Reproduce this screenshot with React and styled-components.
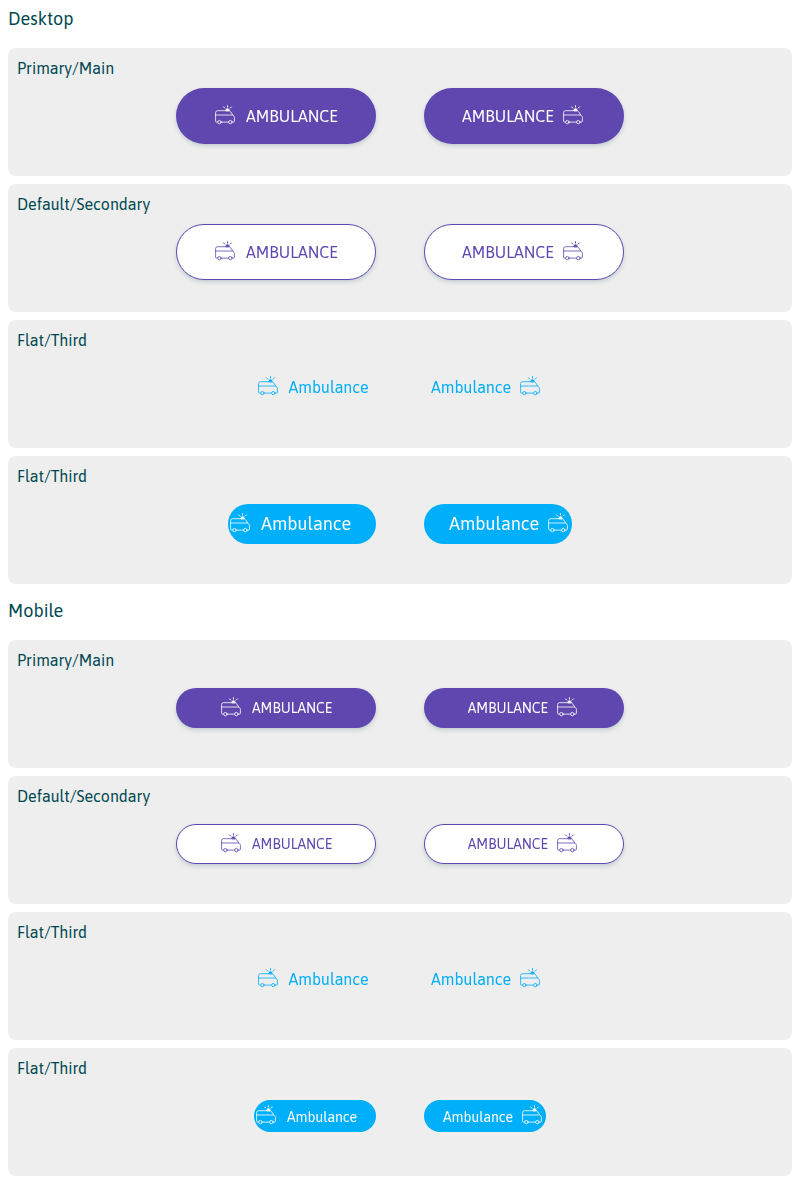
import React from "react";
import styled, { createGlobalStyle, css } from "styled-components";

const GlobalStyle = createGlobalStyle`
  *, *::before, *::after { box-sizing: border-box; }
  body {
    margin: 0;
    background: #fff;
    color: #004851;
    font-family: Asap, Roboto, "Noto Sans", sans-serif;
    font-size: 16px;
  }
`;

const Section = styled.section`
  display: flex;
  flex-direction: column;
  gap: 8px;
  padding: 0 8px 8px;
`;

const Heading = styled.h3`
  margin: 0;
  height: 40px;
  padding-top: 7px;
  font-size: 18px;
  line-height: 24px;
  font-weight: 400;
`;

const Panel = styled.div`
  height: 128px;
  border-radius: 8px;
  background: #eee;
`;

const PanelTitle = styled.div`
  height: 40px;
  padding: 10px 9px 0;
  line-height: 20px;
`;

const ButtonRow = styled.div`
  display: grid;
  grid-template-columns: 1fr 1fr;
  column-gap: 48px;
  height: 56px;
  align-items: center;

  & > :first-child { justify-self: end; }
  & > :last-child { justify-self: start; }
`;

const looks = {
  primary: css`
    color: #fff;
    background: #5f47af;
    box-shadow: 0 2px 4px rgba(0, 72, 81, 0.2);
  `,
  secondary: css`
    color: #5f47af;
    background: #fff;
    border: 1px solid #5f47af;
    box-shadow: 0 2px 4px rgba(0, 72, 81, 0.2);
  `,
  flat: css`
    color: #00aff9;
    background: transparent;
    padding-bottom: 2px;
  `,
  filled: css`
    color: #fff;
    background: #00aff9;
  `,
};

const Button = styled.button`
  display: flex;
  align-items: center;
  justify-content: ${(p) => p.$justify || "center"};
  flex-direction: ${(p) => (p.$iconEnd ? "row-reverse" : "row")};
  gap: ${(p) => (p.$iconEnd ? 7 : 9)}px;
  width: ${(p) => p.$width}px;
  height: ${(p) => p.$height}px;
  padding: 0 ${(p) => (p.$iconEnd ? p.$endPad : p.$startPad || 0)}px 0 0;
  border: 0;
  border-radius: ${(p) => p.$height / 2}px;
  font: inherit;
  font-size: ${(p) => p.$size}px;
  white-space: nowrap;
  will-change: transform;
  ${(p) => looks[p.$look]}
`;

const Label = styled.span`
  width: ${(p) => p.$width}px;
  padding-top: ${(p) => p.$drop || 0}px;
  line-height: 20px;
  text-align: left;
`;

const Icon = styled.svg`
  flex: none;
  width: 24px;
  height: 24px;
  fill: none;
  stroke: currentColor;
  stroke-width: 0.8;
  stroke-linecap: round;
  stroke-linejoin: round;
`;

const Ambulance = () => (
  <Icon viewBox="0 0 24 24" aria-hidden="true">
    <path d="M4.6 18.1H3.6a1 1 0 0 1-1-1V8.7a2 2 0 0 1 2-2h11.2c.8 0 1.3.3 1.8 1l2.3 3.6c1.1.5 1.5 1.2 1.5 2.2v3.6a1 1 0 0 1-1 1h-1.2M8.2 18.1h7.3M2.6 11h17" />
    <circle cx="6.4" cy="18.1" r="1.7" />
    <circle cx="17.3" cy="18.1" r="1.7" />
    <path d="M12.8 6.5c0-1.2.7-1.8 1.7-1.8s1.7.6 1.7 1.8z" fill="currentColor" />
    <path d="M14.5 1.7v1.3M10.6 2.9l1.2 1.2M18.4 2.9l-1.2 1.2" strokeWidth="1" />
  </Icon>
);

const desktop = [
  { title: "Primary/Main", text: "AMBULANCE", label: 92, props: { $look: "primary", $width: 200, $height: 56, $size: 16, $startPad: 1, $endPad: 1 } },
  { title: "Default/Secondary", text: "AMBULANCE", label: 92, props: { $look: "secondary", $width: 200, $height: 56, $size: 16, $startPad: 1, $endPad: 1 } },
  { title: "Flat/Third", text: "Ambulance", label: 80, props: { $look: "flat", $width: 128, $height: 40, $size: 16, $endPad: 3 } },
  { title: "Flat/Third", text: "Ambulance", label: 90, props: { $look: "filled", $width: 148, $height: 40, $size: 18, $justify: "flex-start", $endPad: 2 } },
];

const mobile = [
  { title: "Primary/Main", text: "AMBULANCE", label: 80.5, props: { $look: "primary", $width: 200, $height: 40, $size: 14, $startPad: 0.5, $endPad: 1 } },
  { title: "Default/Secondary", text: "AMBULANCE", label: 80.5, props: { $look: "secondary", $width: 200, $height: 40, $size: 14, $startPad: 0.5, $endPad: 1 } },
  { title: "Flat/Third", text: "Ambulance", label: 80, props: { $look: "flat", $width: 128, $height: 40, $size: 16, $endPad: 3 } },
  { title: "Flat/Third", text: "Ambulance", label: 70, drop: 2, props: { $look: "filled", $width: 122, $height: 32, $size: 14, $justify: "flex-start", $endPad: 2 } },
];

const Showcase = ({ heading, items }) => (
  <Section>
    <Heading>{heading}</Heading>
    {items.map(({ title, text, label, drop, props }, i) => (
      <Panel key={i}>
        <PanelTitle>{title}</PanelTitle>
        <ButtonRow>
          <Button {...props}>
            <Ambulance />
            <Label $width={label} $drop={drop}>{text}</Label>
          </Button>
          <Button {...props} $iconEnd>
            <Ambulance />
            <Label $width={label} $drop={drop}>{text}</Label>
          </Button>
        </ButtonRow>
      </Panel>
    ))}
  </Section>
);

export default function App() {
  return (
    <>
      <GlobalStyle />
      <Showcase heading="Desktop" items={desktop} />
      <Showcase heading="Mobile" items={mobile} />
    </>
  );
}
